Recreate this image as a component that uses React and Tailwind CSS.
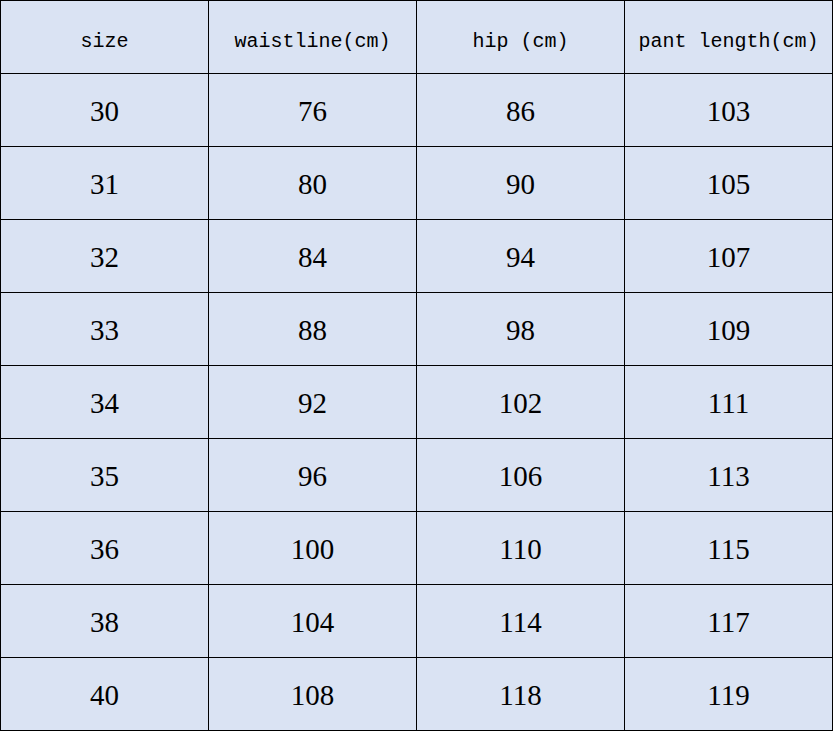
const header = ['size', 'waistline(cm)', 'hip (cm)', 'pant length(cm)'];

const rows = [
  ['30', '76', '86', '103'],
  ['31', '80', '90', '105'],
  ['32', '84', '94', '107'],
  ['33', '88', '98', '109'],
  ['34', '92', '102', '111'],
  ['35', '96', '106', '113'],
  ['36', '100', '110', '115'],
  ['38', '104', '114', '117'],
  ['40', '108', '118', '119'],
];

export default function App() {
  return (
    <div className="min-h-screen bg-white">
      <div className="grid w-[833px] grid-cols-[repeat(4,207px)] auto-rows-[72px] gap-px bg-black p-px">
        {header.map((h) => (
          <div
            key={h}
            className="flex items-center justify-center bg-[#dae3f3] pt-[9px] font-['Liberation_Mono',monospace] text-[20px] text-black whitespace-pre"
          >
            {h}
          </div>
        ))}
        {rows.map((r, i) =>
          r.map((v, j) => (
            <div
              key={`${i}-${j}`}
              className="flex items-center justify-center bg-[#dae3f3] pt-[4px] font-['Liberation_Serif',serif] text-[29px] text-black"
            >
              {v}
            </div>
          ))
        )}
      </div>
    </div>
  );
}
